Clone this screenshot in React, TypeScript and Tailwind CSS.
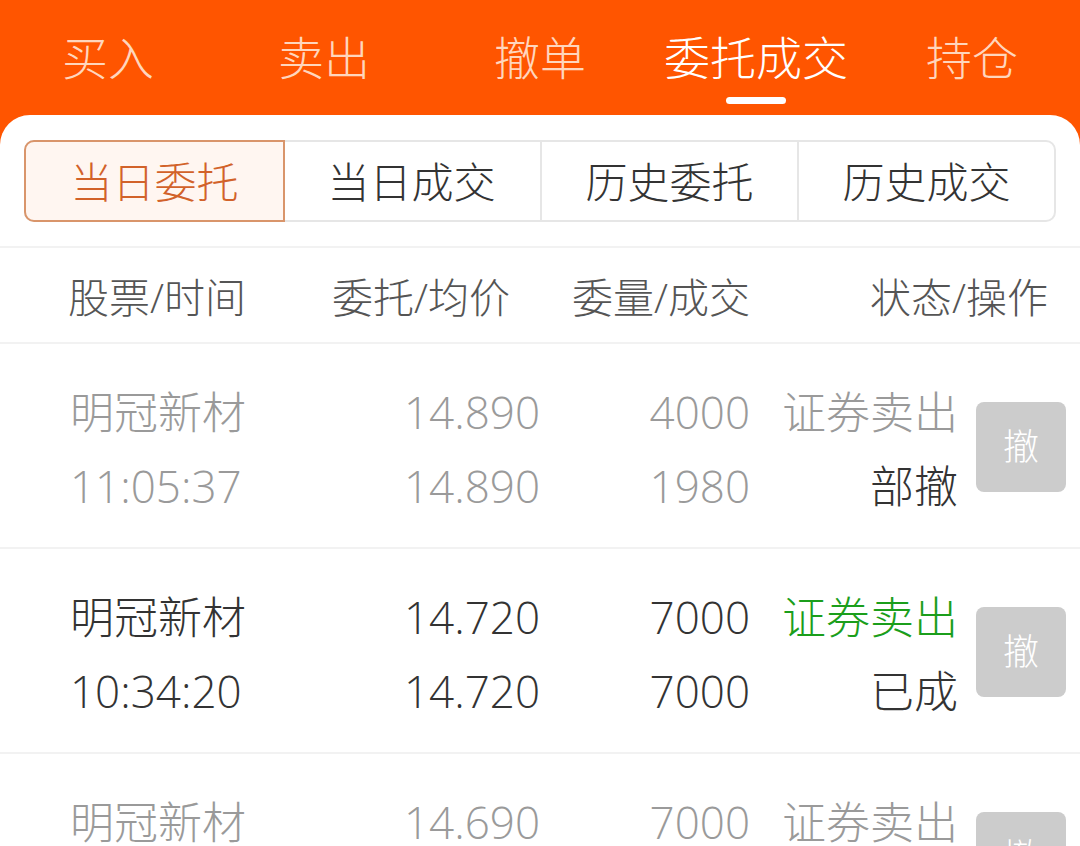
import React from 'react';

type Order = {
  name: string;
  time: string;
  price: string;
  avg: string;
  qty: string;
  filled: string;
  side: string;
  status: string;
  active: boolean;
};

const orders: Order[] = [
  { name: '明冠新材', time: '11:05:37', price: '14.890', avg: '14.890', qty: '4000', filled: '1980', side: '证券卖出', status: '部撤', active: false },
  { name: '明冠新材', time: '10:34:20', price: '14.720', avg: '14.720', qty: '7000', filled: '7000', side: '证券卖出', status: '已成', active: true },
  { name: '明冠新材', time: '10:12:08', price: '14.690', avg: '14.690', qty: '7000', filled: '7000', side: '证券卖出', status: '已成', active: false },
];

const topTabs = ['买入', '卖出', '撤单', '委托成交', '持仓'];
const segments = ['当日委托', '当日成交', '历史委托', '历史成交'];

const font = { fontFamily: '"Open Sans", "Noto Sans CJK SC", sans-serif' };

function OrderRow({ o }: { o: Order }) {
  const base = o.active ? 'text-[#333333]' : 'text-[#9a9a9a]';
  return (
    <div className="flex items-center h-[205px] pl-[70px] pr-[14px] border-b-2 border-[#f2f2f2] text-[44px] leading-[74px] font-light">
      <div className={`flex-1 flex flex-col pt-[6px] ${base}`}>
        <span>{o.name}</span>
        <span>{o.time}</span>
      </div>
      <div className={`w-[200px] flex flex-col items-end pt-[6px] ${base}`}>
        <span>{o.price}</span>
        <span>{o.avg}</span>
      </div>
      <div className={`w-[210px] flex flex-col items-end pt-[6px] ${base}`}>
        <span>{o.qty}</span>
        <span>{o.filled}</span>
      </div>
      <div className="w-[208px] flex flex-col items-end pt-[6px]">
        <span className={o.active ? 'text-[#1b9e1b]' : 'text-[#9a9a9a]'}>{o.side}</span>
        <span className="text-[#333333]">{o.status}</span>
      </div>
      <button className="ml-[18px] mt-[2px] w-[90px] h-[90px] rounded-[8px] bg-[#cccccc] text-white text-[36px] leading-none flex items-center justify-center">
        撤
      </button>
    </div>
  );
}

export default function App() {
  return (
    <div className="w-[1080px] h-[846px] overflow-hidden bg-[#ff5500] flex flex-col" style={font}>
      <div className="h-[115px] grid grid-cols-5 shrink-0">
        {topTabs.map((t) => {
          const on = t === '委托成交';
          return (
            <div key={t} className="flex flex-col items-center pt-[34px]">
              <span className={`text-[46px] leading-none font-light ${on ? 'text-white' : 'text-[#ffd6bd]'}`}>{t}</span>
              {on && <span className="mt-[17px] w-[60px] h-[7px] rounded-full bg-white" />}
            </div>
          );
        })}
      </div>

      <div className="flex-1 bg-white rounded-t-[30px]">
        <div className="pt-[25px] pb-[24px] px-[24px] border-b-2 border-[#f2f2f2]">
          <div className="grid grid-cols-4 h-[82px] rounded-[10px] border-2 border-[#e6e6e6] font-light">
            {segments.map((s, i) => (
              <div
                key={s}
                className={
                  i === 0
                    ? '-m-[2px] flex items-center justify-center rounded-l-[10px] border-2 border-[#d9956b] bg-[#fff6f1] text-[#d2622a] text-[42px]'
                    : i === 1
                      ? 'flex items-center justify-center text-[#333333] text-[42px]'
                      : 'flex items-center justify-center border-l-2 border-[#e6e6e6] text-[#333333] text-[42px]'
                }
              >
                {s}
              </div>
            ))}
          </div>
        </div>

        <div className="flex items-center h-[96px] pt-[6px] pl-[68px] pr-[32px] border-b-2 border-[#f2f2f2] text-[41px] text-[#555555] font-light whitespace-nowrap">
          <div className="flex-1">股票/时间</div>
          <div className="w-[250px] text-right">委托/均价</div>
          <div className="w-[240px] text-right">委量/成交</div>
          <div className="w-[298px] text-right">状态/操作</div>
        </div>

        {orders.map((o, i) => (
          <OrderRow key={i} o={o} />
        ))}
      </div>
    </div>
  );
}
